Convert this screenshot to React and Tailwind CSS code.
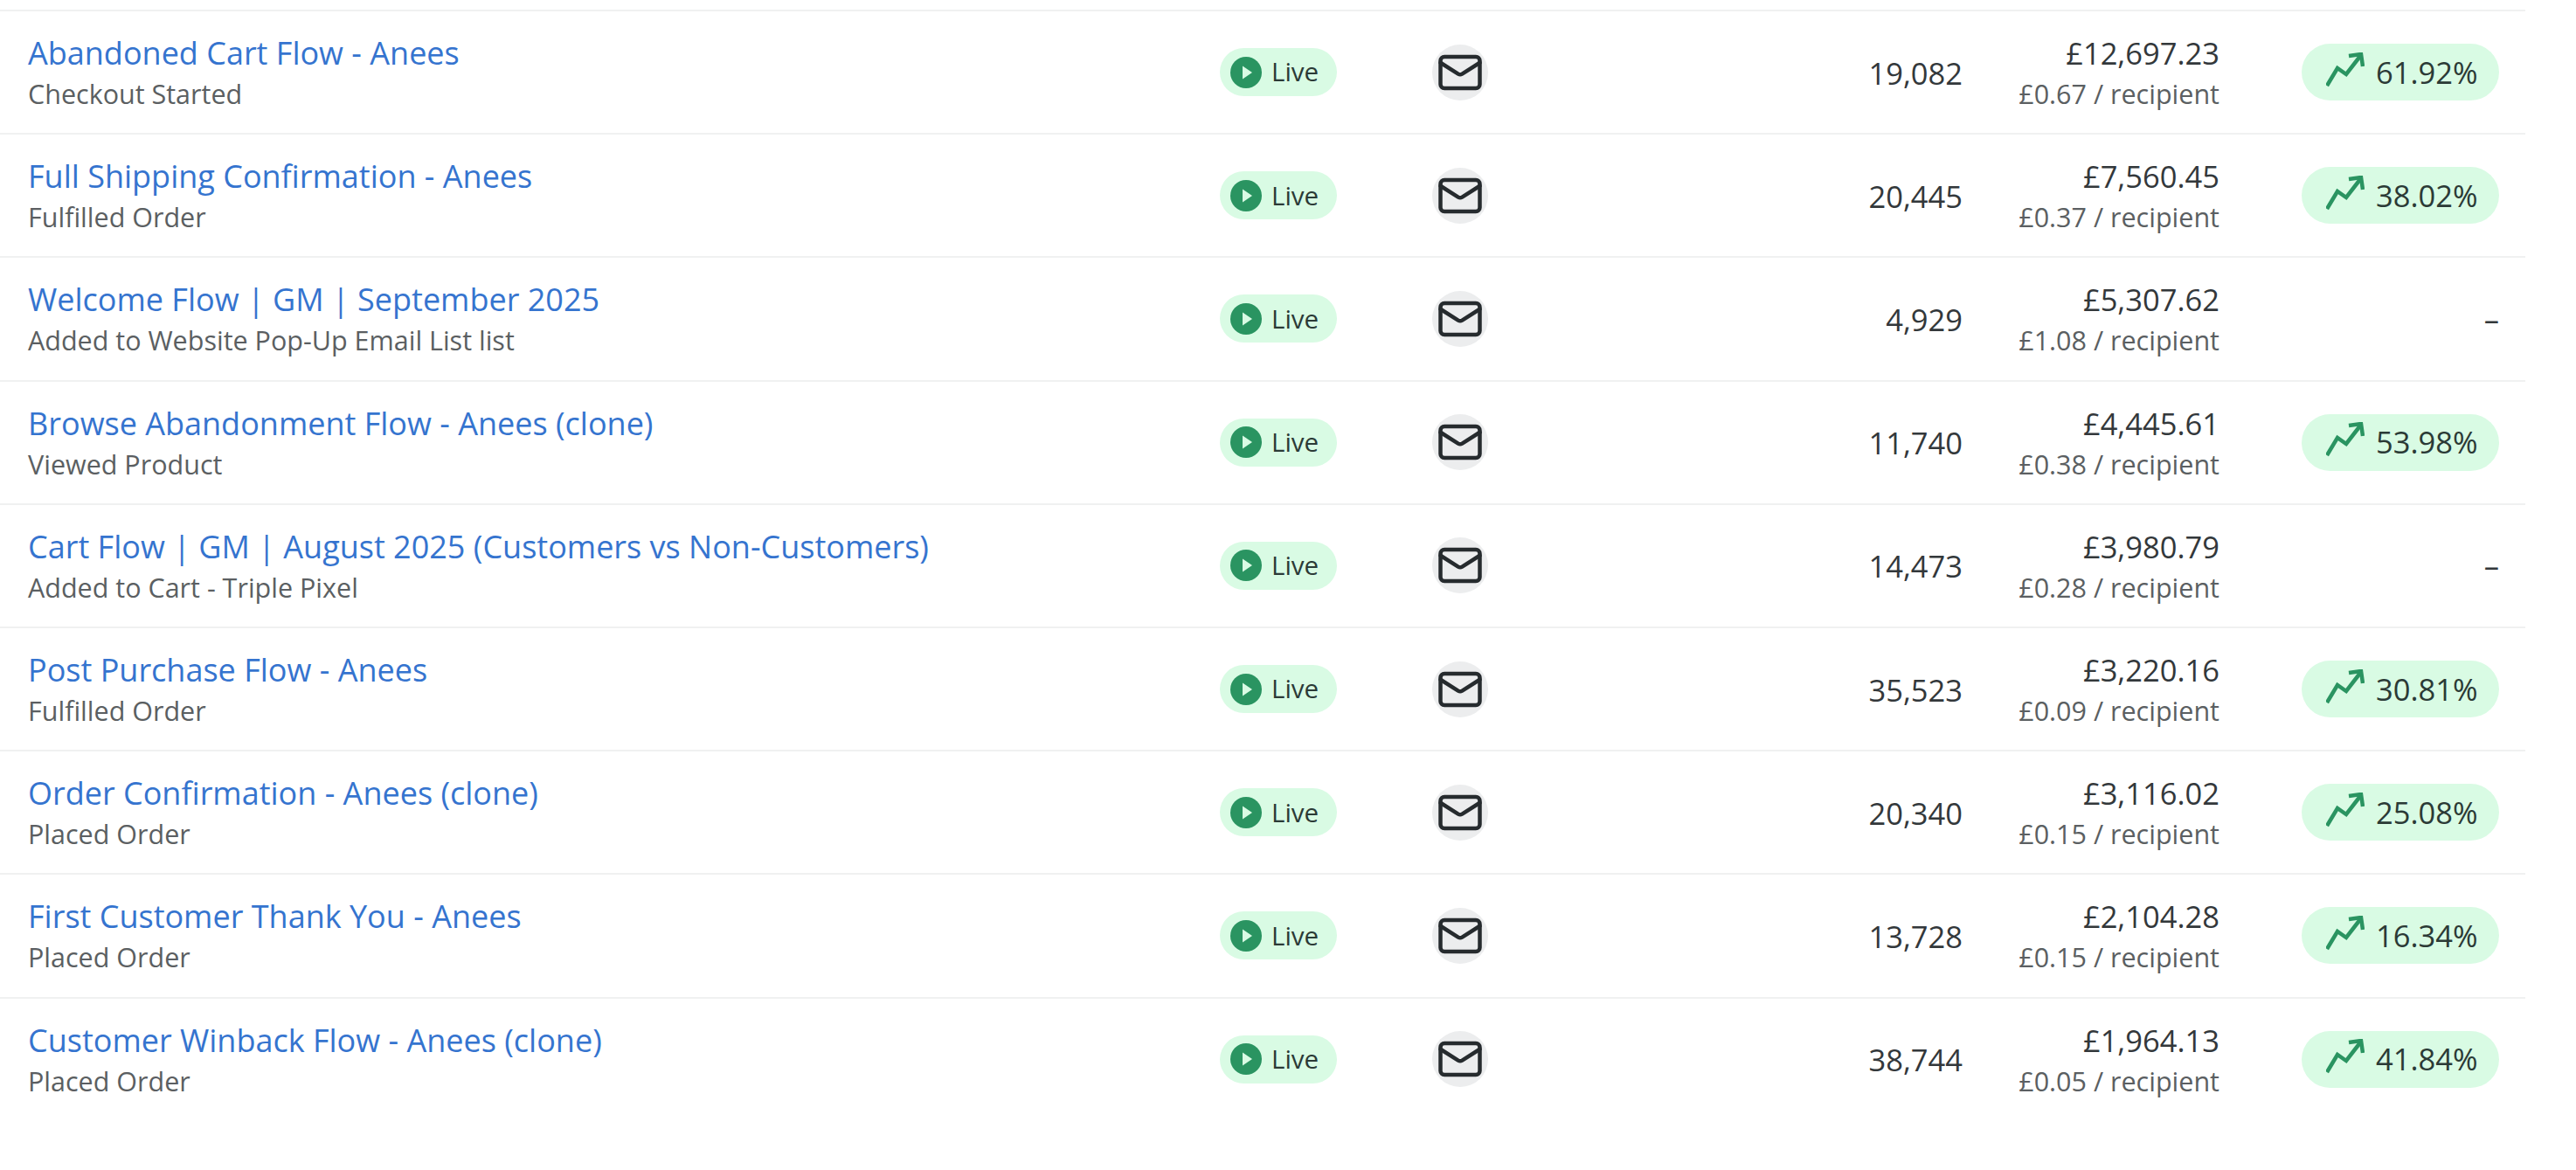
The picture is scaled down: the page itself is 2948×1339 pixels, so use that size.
import { Mail } from 'lucide-react'

const flows = [
  { name: 'Abandoned Cart Flow - Anees', trigger: 'Checkout Started', recipients: '19,082', revenue: '£12,697.23', perRecipient: '£0.67', rate: '61.92%' },
  { name: 'Full Shipping Confirmation - Anees', trigger: 'Fulfilled Order', recipients: '20,445', revenue: '£7,560.45', perRecipient: '£0.37', rate: '38.02%' },
  { name: 'Welcome Flow | GM | September 2025', trigger: 'Added to Website Pop-Up Email List list', recipients: '4,929', revenue: '£5,307.62', perRecipient: '£1.08', rate: null },
  { name: 'Browse Abandonment Flow - Anees (clone)', trigger: 'Viewed Product', recipients: '11,740', revenue: '£4,445.61', perRecipient: '£0.38', rate: '53.98%' },
  { name: 'Cart Flow | GM | August 2025 (Customers vs Non-Customers)', trigger: 'Added to Cart - Triple Pixel', recipients: '14,473', revenue: '£3,980.79', perRecipient: '£0.28', rate: null },
  { name: 'Post Purchase Flow - Anees', trigger: 'Fulfilled Order', recipients: '35,523', revenue: '£3,220.16', perRecipient: '£0.09', rate: '30.81%' },
  { name: 'Order Confirmation - Anees (clone)', trigger: 'Placed Order', recipients: '20,340', revenue: '£3,116.02', perRecipient: '£0.15', rate: '25.08%' },
  { name: 'First Customer Thank You - Anees', trigger: 'Placed Order', recipients: '13,728', revenue: '£2,104.28', perRecipient: '£0.15', rate: '16.34%' },
  { name: 'Customer Winback Flow - Anees (clone)', trigger: 'Placed Order', recipients: '38,744', revenue: '£1,964.13', perRecipient: '£0.05', rate: '41.84%' },
]

function LiveBadge() {
  return (
    <span className="flex h-[55px] w-[134px] items-center gap-[11px] rounded-full bg-[#d9fbe4] pl-[12px] text-[29.5px] text-[#2b3a36]">
      <svg width="36" height="36" viewBox="0 0 36 36" className="shrink-0">
        <circle cx="18" cy="18" r="18" fill="#2a9461" />
        <path d="M14 10.5 L25 18 L14 25.5 Z" fill="#d9fbe4" />
      </svg>
      Live
    </span>
  )
}

function RateBadge({ value }) {
  return (
    <span className="flex h-[65px] w-[226px] items-center rounded-full bg-[#d9fbe4] pl-[28px] text-[34.5px] text-[#2b3a36]">
      <svg width="44" height="40" viewBox="0 0 44 40" fill="none" stroke="#2a9461" strokeWidth="4.5" className="mr-[13px] shrink-0 -translate-y-[3px]">
        <path d="M1 38 L13 18 L23 25 L40 3" />
        <path d="M26 4 L40 2 L42 16" />
      </svg>
      {value}
    </span>
  )
}

export default function App() {
  return (
    <div className="min-h-[1339px] w-[2948px] bg-white pt-[11px] font-['Open_Sans',sans-serif]">
      <div className="w-[2890px]">
        {flows.map((flow) => (
          <div
            key={flow.name}
            className="grid h-[141.2px] grid-cols-[1396px_243px_300px_307px_294px_1fr] items-center border-t-2 border-[#f0f1f1]"
          >
            <div className="pl-[32px] pt-[3px]">
              <p className="text-[36px] leading-[47px] text-[#3574cf]">{flow.name}</p>
              <p className="text-[30.5px] leading-[47px] text-[#5b5f62]">{flow.trigger}</p>
            </div>
            <div>
              <LiveBadge />
            </div>
            <div>
              <span className="flex h-[64px] w-[64px] items-center justify-center rounded-full bg-[#ecedee]">
                <Mail size={54} strokeWidth={2} color="#262b2e" />
              </span>
            </div>
            <p className="pt-[2px] text-right text-[34.5px] text-[#33383b]">{flow.recipients}</p>
            <div className="pt-[3px] text-right">
              <p className="text-[34.5px] leading-[47px] text-[#33383b]">{flow.revenue}</p>
              <p className="text-[30.5px] leading-[47px] text-[#5b5f62]">{flow.perRecipient} / recipient</p>
            </div>
            <div className="flex justify-end pr-[30px] text-[34.5px] text-[#33383b]">
              {flow.rate ? <RateBadge value={flow.rate} /> : '–'}
            </div>
          </div>
        ))}
      </div>
    </div>
  )
}
